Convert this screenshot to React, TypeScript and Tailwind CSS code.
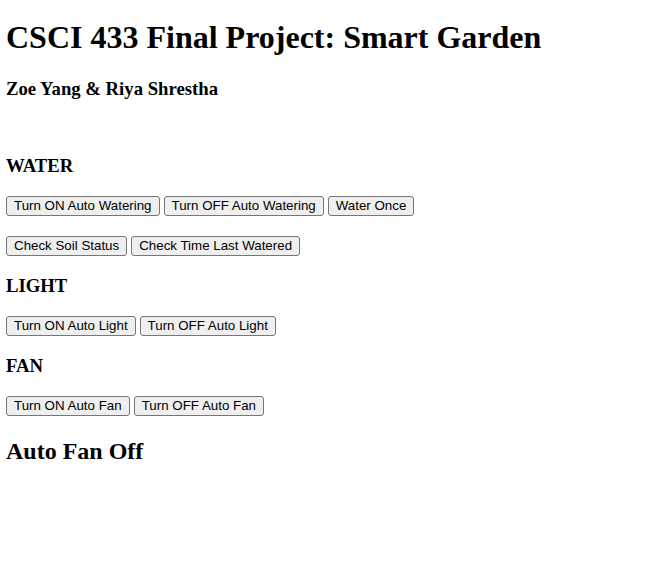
import React from "react";

const Btn = ({ children }: { children: React.ReactNode }) => (
  <button className="h-[20px] px-[7px] bg-[#efefef] border border-[#767676] rounded-[3px] text-[13.333px] leading-[16px] text-black font-['Liberation_Sans',Arial,sans-serif]">
    {children}
  </button>
);

export default function App() {
  return (
    <div className="min-h-[563px] bg-white text-black pl-[6px] pt-[19px] font-['Liberation_Serif','Times_New_Roman',serif]">
      <h1 className="text-[32px] leading-[36px] font-bold">CSCI 433 Final Project: Smart Garden</h1>
      <h3 className="mt-[23px] text-[18.72px] leading-[22px] font-bold">Zoe Yang &amp; Riya Shrestha</h3>
      <h3 className="mt-[55px] text-[18.72px] leading-[22px] font-bold">WATER</h3>
      <div className="mt-[19px] flex gap-[4px]">
        <Btn>Turn ON Auto Watering</Btn>
        <Btn>Turn OFF Auto Watering</Btn>
        <Btn>Water Once</Btn>
      </div>
      <div className="mt-[20px] flex gap-[4px]">
        <Btn>Check Soil Status</Btn>
        <Btn>Check Time Last Watered</Btn>
      </div>
      <h3 className="mt-[19px] text-[18.72px] leading-[22px] font-bold">LIGHT</h3>
      <div className="mt-[19px] flex gap-[4px]">
        <Btn>Turn ON Auto Light</Btn>
        <Btn>Turn OFF Auto Light</Btn>
      </div>
      <h3 className="mt-[19px] text-[18.72px] leading-[22px] font-bold">FAN</h3>
      <div className="mt-[19px] flex gap-[4px]">
        <Btn>Turn ON Auto Fan</Btn>
        <Btn>Turn OFF Auto Fan</Btn>
      </div>
      <h2 className="mt-[21px] text-[24px] leading-[28px] font-bold">Auto Fan Off</h2>
    </div>
  );
}
